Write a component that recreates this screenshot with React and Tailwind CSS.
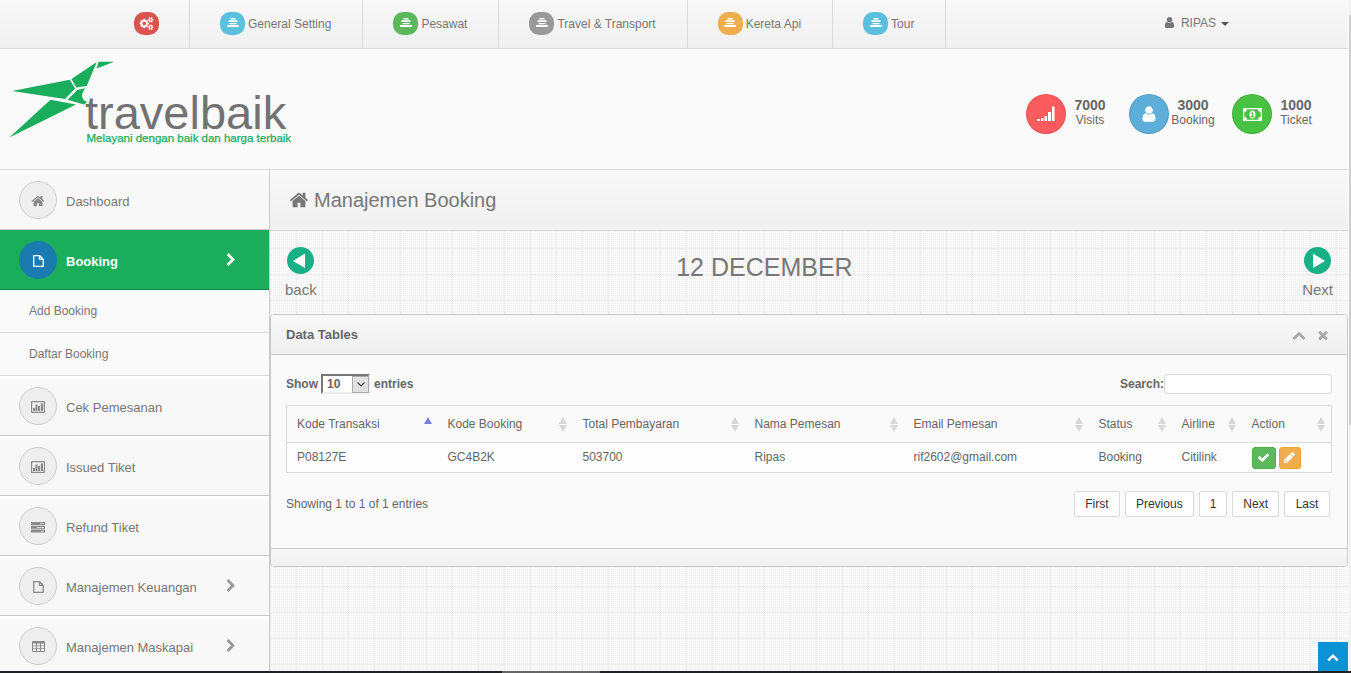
import React from "react";

const PATHS = {
  home: "M1472 992v480q0 26-19 45t-45 19h-384v-384h-256v384h-384q-26 0-45-19t-19-45v-480q0-1 .5-3t.5-3l575-474 575 474q1 2 1 6zm223-69l-62 74q-8 9-21 11h-3q-13 0-21-7l-692-577-692 577q-12 8-24 7-13-2-21-11l-62-74q-8-10-7-23.5t11-21.5l719-599q32-26 76-26t76 26l244 204v-195q0-14 9-23t23-9h192q14 0 23 9t9 23v408l219 182q10 8 11 21.5t-7 23.5z",
  user: "M1536 1399q0 109-62.5 187t-150.5 78h-854q-88 0-150.5-78t-62.5-187q0-85 8.5-160.5t31.5-152 58.5-131 94-89 134.5-34.5q131 128 313 128t313-128q76 0 134.5 34.5t94 89 58.5 131 31.5 152 8.5 160.5zm-256-887q0 159-112.5 271.5t-271.5 112.5-271.5-112.5-112.5-271.5 112.5-271.5 271.5-112.5 271.5 112.5 112.5 271.5z",
  check: "M1671 566q0 40-28 68l-724 724-136 136q-28 28-68 28t-68-28l-136-136-362-362q-28-28-28-68t28-68l136-136q28-28 68-28t68 28l294 295 656-657q28-28 68-28t68 28l136 136q28 28 28 68z",
  times: "M1490 1322q0 40-28 68l-136 136q-28 28-68 28t-68-28l-294-294-294 294q-28 28-68 28t-68-28l-136-136q-28-28-28-68t28-68l294-294-294-294q-28-28-28-68t28-68l136-136q28-28 68-28t68 28l294 294 294-294q28-28 68-28t68 28l136 136q28 28 28 68t-28 68l-294 294 294 294q28 28 28 68z",
  pencil: "M491 1536l60-60-235-235-60 60v107h128v128h107zM960 416l416 416-832 832h-416v-416zm683 96q0 53-37 90l-166 166-416-416 166-165q36-38 90-38 53 0 91 38l235 234q37 39 37 91z",
  right: "M1363 877l-742 742q-19 19-45 19t-45-19l-166-166q-19-19-19-45t19-45l531-531-531-531q-19-19-19-45t19-45l166-166q19-19 45-19t45 19l742 742q19 19 19 45t-19 45z",
  up: "M1683 1331l-166 165q-19 19-45 19t-45-19l-531-531-531 531q-19 19-45 19t-45-19l-166-165q-19-19-19-45.5t19-45.5l742-741q19-19 45-19t45 19l742 741q19 19 19 45.5t-19 45.5z",
  cogs: "M832 896q0-106-75-181t-181-75-181 75-75 181 75 181 181 75 181-75 75-181zm768 512q0-52-38-90t-90-38-90 38-38 90q0 53 37.5 90.5t90.5 37.5 90.5-37.5 37.5-90.5zm0-1024q0-52-38-90t-90-38-90 38-38 90q0 53 37.5 90.5t90.5 37.5 90.5-37.5 37.5-90.5zm-384 421v185q0 10-7 19.5t-16 10.5l-155 24q-11 35-32 76 34 48 90 115 7 11 7 20 0 12-7 19-23 30-82.5 89.5t-78.5 59.5q-11 0-21-7l-115-90q-37 19-77 31-11 108-23 155-7 24-30 24h-186q-11 0-20-7.5t-10-17.5l-23-153q-34-10-75-31l-118 89q-7 7-20 7-11 0-21-8-144-133-144-160 0-9 7-19 10-14 41-53t47-61q-23-44-35-82l-152-24q-10-1-17-9.5t-7-19.5v-185q0-10 7-19.5t16-10.5l155-24q11-35 32-76-34-48-90-115-7-11-7-20 0-12 7-20 22-30 82-89t79-59q11 0 21 7l115 90q34-18 77-32 11-108 23-154 7-24 30-24h186q11 0 20 7.5t10 17.5l23 153q34 10 75 31l118-89q8-7 20-7 11 0 21 8 144 133 144 160 0 8-7 19-12 16-42 54t-45 60q23 48 34 82l152 23q10 2 17 10.5t7 19.5zm640 533v140q0 16-149 31-12 27-30 52 51 113 51 138 0 4-4 7-122 71-124 71-8 0-46-47t-52-68q-20 2-30 2t-30-2q-14 21-52 68t-46 47q-2 0-124-71-4-3-4-7 0-25 51-138-18-25-30-52-149-15-149-31v-140q0-16 149-31 13-29 30-52-51-113-51-138 0-4 4-7 4-2 35-20t59-34 30-16q8 0 46 46.5t52 67.5q20-2 30-2t30 2q51-71 92-112l6-2q4 0 124 70 4 3 4 7 0 25-51 138 17 23 30 52 149 15 149 31zm0-1024v140q0 16-149 31-12 27-30 52 51 113 51 138 0 4-4 7-122 71-124 71-8 0-46-47t-52-68q-20 2-30 2t-30-2q-14 21-52 68t-46 47q-2 0-124-71-4-3-4-7 0-25 51-138-18-25-30-52-149-15-149-31v-140q0-16 149-31 13-29 30-52-51-113-51-138 0-4 4-7 4-2 35-20t59-34 30-16q8 0 46 46.5t52 67.5q20-2 30-2t30 2q51-71 92-112l6-2q4 0 124 70 4 3 4 7 0 25-51 138 17 23 30 52 149 15 149 31z",
  file: "M1596 380q28 28 48 76t20 88v1152q0 40-28 68t-68 28h-1344q-40 0-68-28t-28-68v-1600q0-40 28-68t68-28h896q40 0 88 20t76 48zm-444-244v376h376q-10-29-22-41l-313-313q-12-12-41-22zm384 1528v-1024h-416q-40 0-68-28t-28-68v-416h-768v1536h1280z",
};

function Icon({ name, className = "size-[14px]" }) {
  return (
    <svg viewBox="0 0 1792 1792" fill="currentColor" aria-hidden="true" className={"shrink-0 overflow-visible " + className}>
      <path d={PATHS[name]} />
    </svg>
  );
}

const FileIcon = () => (
  <svg viewBox="0 0 11 12" className="h-3 w-[11px]" fill="none" stroke="currentColor" strokeWidth="1.300" strokeLinejoin="round" aria-hidden="true">
    <path d="M.7.7h6l3.500 3.500v7.100h-9.500zM6.500.7v3.700h3.700" />
  </svg>
);

const StackIcon = () => (
  <svg viewBox="0 0 12 11" className="h-[11px] w-3" fill="currentColor" aria-hidden="true">
    <path d="M3.500 0h5v1.500h-5zM1.500 2.200h9v1.800h-9zM2.500 5h7v1.300h-7zM0 7h12v2h-12z" />
  </svg>
);

const ChartIcon = () => (
  <svg viewBox="0 0 14 12" className="h-3 w-[14px]" fill="currentColor" aria-hidden="true">
    <path fillRule="evenodd" d="M1 0h12q1 0 1 1v10q0 1-1 1h-12q-1 0-1-1v-10q0-1 1-1zM1.200 1.200v9.600h11.600v-9.600z" />
    <path d="M2 7h2v3h-2zM4.500 3.500h2v6.500h-2zM7 5h2v5h-2zM9.800 2.500h2.200v7.500h-2.200z" />
  </svg>
);

const TasksIcon = () => (
  <svg viewBox="0 0 14 12" className="h-3 w-[14px]" fill="currentColor" aria-hidden="true">
    <path fillRule="evenodd" d="M0 1h14v3h-14zM9 2.200h4v.8h-4zM0 4.700h14v3h-14zM6 6h7v.8h-7zM0 8.500h14v3h-14zM10 9.700h3v.8h-3z" />
  </svg>
);

const GridIcon = () => (
  <svg viewBox="0 0 13 12" className="h-3 w-[13px]" fill="currentColor" aria-hidden="true">
    <path fillRule="evenodd" d="M1 0h11q1 0 1 1v9q0 1-1 1h-11q-1 0-1-1v-9q0-1 1-1zM1 2.500v2h3v-2zM5 2.500v2h3v-2zM9 2.500v2h3v-2zM1 5.300v2h3v-2zM5 5.300v2h3v-2zM9 5.300v2h3v-2zM1 8.100v2h3v-2zM5 8.100v2h3v-2zM9 8.100v2h3v-2z" />
  </svg>
);

const SignalIcon = () => (
  <svg viewBox="0 0 18 16" className="h-4 w-[18px]" fill="currentColor" aria-hidden="true">
    <path d="M0 13h3v2h-3zM4 12h2.500v3h-2.500zM7.500 10h2.500v5h-2.500zM11 6h3v9h-3zM15 0.500h2.500v14.500h-2.500z" />
  </svg>
);

const MoneyIcon = () => (
  <svg viewBox="0 0 19 13" className="h-[13px] w-[19px]" fill="currentColor" aria-hidden="true">
    <path fillRule="evenodd" d="M0 0h19v13h-19zM4 1.300a2.700 2.700 0 0 1-2.700 2.700v5a2.700 2.700 0 0 1 2.700 2.700h11a2.700 2.700 0 0 1 2.700-2.700v-5a2.700 2.700 0 0 1-2.700-2.700z" />
    <path fillRule="evenodd" d="M9.500 2.500c2 0 3 2 3 4s-1 4-3 4-3-2-3-4 1-4 3-4zM9.200 4.200l-1.500 1.200.6.700.7-.5v2.500h-1v.9h3v-.9h-.9v-3.900z" />
  </svg>
);

const ArrowCircle = ({ flip }) => (
  <svg viewBox="0 0 27 27" className={flip ? "size-[27px] -scale-x-100" : "size-[27px]"} aria-hidden="true">
    <circle cx="13.500" cy="13.500" r="13.500" fill="#19b088" />
    <path d="M6 14 18 6.500v14.500z" fill="#fff" />
  </svg>
);

const Logo = () => (
  <svg viewBox="18 120 564 172" className="h-[86px] w-[282px]" role="img" aria-label="travelbaik">
    <g transform="scale(2)" fill="#1aad5c">
      <path d="M98.700 61.800 114.200 61.800 96.500 68.500z" />
      <path d="M96.800 62 86.700 86 76.300 87.500 71.500 79z" />
      <path d="M12 91 69.700 79.800 75.200 88.500 65 99z" />
      <path d="M77.300 90 85 88.300 82.300 93.500 82 96.500 84 100.500 87.300 102 84 104.500 67.500 99.700z" />
      <path d="M50.500 99.800 76 104.500 9.300 137.500z" />
    </g>
    <text x="170" y="258" fontSize="94" fill="#727272" fontFamily="Liberation Sans, sans-serif">travelbaik</text>
    <text x="173" y="284" fontSize="23" fill="#1aad5c" stroke="#1aad5c" strokeWidth=".5" fontFamily="Liberation Sans, sans-serif">Melayani dengan baik dan harga terbaik</text>
  </svg>
);

const NAV = [
  { label: "General Setting", color: "bg-[#5bc0de]" },
  { label: "Pesawat", color: "bg-[#5cb85c]" },
  { label: "Travel & Transport", color: "bg-[#999999]" },
  { label: "Kereta Api", color: "bg-[#f0ad4e]" },
  { label: "Tour", color: "bg-[#5bc0de]" },
];

const STATS = [
  { value: "7000", label: "Visits", color: "bg-[#fd5c5e]", icon: <SignalIcon /> },
  { value: "3000", label: "Booking", color: "bg-[#5dafda]", icon: <Icon name="user" className="size-[18px]" /> },
  { value: "1000", label: "Ticket", color: "bg-[#49c143]", icon: <MoneyIcon /> },
];

const MENU = [
  { label: "Dashboard", icon: <Icon name="home" /> },
  { label: "Booking", icon: <FileIcon />, active: true, more: true, sub: ["Add Booking", "Daftar Booking"] },
  { label: "Cek Pemesanan", icon: <ChartIcon /> },
  { label: "Issued Tiket", icon: <ChartIcon /> },
  { label: "Refund Tiket", icon: <TasksIcon /> },
  { label: "Manajemen Keuangan", icon: <FileIcon />, more: true },
  { label: "Manajemen Maskapai", icon: <GridIcon />, more: true },
];

const COLUMNS = [
  { label: "Kode Transaksi", width: "w-[151px]", sorted: true },
  { label: "Kode Booking", width: "w-[135px]" },
  { label: "Total Pembayaran", width: "w-[172px]" },
  { label: "Nama Pemesan", width: "w-[159px]" },
  { label: "Email Pemesan", width: "w-[185px]" },
  { label: "Status", width: "w-[83px]" },
  { label: "Airline", width: "w-[70px]" },
  { label: "Action", width: "w-[90px]" },
];

const ROW = ["P08127E", "GC4B2K", "503700", "Ripas", "rif2602@gmail.com", "Booking", "Citilink"];

const SortIcon = ({ sorted }) => (
  <svg viewBox="0 0 8 15" className="h-[15px] w-2 shrink-0" aria-hidden="true">
    <path d="M4 0 8 7H0z" fill={sorted ? "#7b80e0" : "#d8d8d8"} />
    {!sorted && <path d="M0 8h8L4 15z" fill="#d8d8d8" />}
  </svg>
);

function TopBar() {
  return (
    <header className="flex h-[49px] shrink-0 items-stretch border-b border-[#d9d9d9] bg-linear-to-b from-[#f8f8f8] to-[#f0f0f0] pl-[104px] text-xs text-[#777]">
      <nav className="flex" aria-label="Main">
        <a href="#settings" aria-label="Settings" className="flex items-center border-r border-[#d9d9d9] px-[30px] pb-px">
          <span className="flex h-[23px] w-[25px] items-center justify-center rounded-[10px] bg-[#d9534f] text-white">
            <Icon name="cogs" className="size-[13px]" />
          </span>
        </a>
        {NAV.map((n) => (
          <a key={n.label} href="#nav" className="flex items-center gap-[3px] border-r border-[#d9d9d9] pr-[31px] pb-px pl-[30px] whitespace-nowrap">
            <span className={"flex h-[23px] w-[25px] items-center justify-center rounded-[10px] text-white " + n.color}>
              <StackIcon />
            </span>
            {n.label}
          </a>
        ))}
      </nav>
      <button type="button" className="mr-[119px] ml-auto flex items-center pb-[3px]">
        <Icon name="user" className="mr-[5px] size-[13px]" />
        RIPAS
        <svg viewBox="0 0 8 4" className="mt-[2px] ml-[5px] h-1 w-2" fill="#555" aria-hidden="true">
          <path d="M0 0h8L4 4z" />
        </svg>
      </button>
    </header>
  );
}

function Banner() {
  return (
    <div className="flex h-[121px] shrink-0 items-center justify-between border-b border-[#d9d9d9] bg-[#fafafa] pr-7 pl-[9px]">
      <div className="pb-3">
        <Logo />
      </div>
      <div className="flex gap-[15px] pt-[10px]">
        {STATS.map((s) => (
          <div key={s.label} className="flex items-center">
            <span className={"flex size-10 items-center justify-center rounded-full border border-black/10 text-white " + s.color}>{s.icon}</span>
            <span className="w-12 pb-[3px] text-center text-xs leading-[15px] text-[#666]">
              <strong className="block text-sm leading-4">{s.value}</strong>
              {s.label}
            </span>
          </div>
        ))}
      </div>
    </div>
  );
}

function Sidebar() {
  return (
    <aside className="w-[270px] shrink-0 overflow-hidden border-r border-[#c9c9c9] bg-[#f8f8f8] text-[13px] text-[#777]">
      <ul>
        {MENU.map((m) => (
          <li key={m.label}>
            <a
              href="#menu"
              className={
                "flex h-[60px] items-center border-b pr-[31px] pl-[19px] " +
                (m.active ? "border-[#148a48] bg-[#1aad5c] font-bold text-white" : "border-[#c9c9c9] bg-linear-to-b from-white from-0% to-[#f8f8f8] to-10%")
              }
            >
              <span
                className={
                  "mr-[9px] flex size-[38px] items-center justify-center rounded-full " +
                  (m.active ? "bg-[#1a7bb0]" : "border border-[#ccc] bg-[#eee] text-[#8a8a8a]")
                }
              >
                <span className="pt-[2px]">{m.icon}</span>
              </span>
              <span className="pt-1">{m.label}</span>
              {m.more && <Icon name="right" className={m.active ? "ml-auto size-[14px]" : "ml-auto size-[14px] text-[#999]"} />}
            </a>
            {m.sub && (
              <ul className="bg-[#fafafa] text-xs">
                {m.sub.map((s) => (
                  <li key={s}>
                    <a href="#sub" className="flex h-[43px] items-center border-b border-[#d9d9d9] pl-[29px]">
                      {s}
                    </a>
                  </li>
                ))}
              </ul>
            )}
          </li>
        ))}
      </ul>
    </aside>
  );
}

function BookingTable() {
  return (
    <table className="mt-[11px] w-full table-fixed border-collapse border border-[#d9d9d9] text-left">
      <thead>
        <tr className="h-[37px] border-b border-[#d9d9d9]">
          {COLUMNS.map((c) => (
            <th key={c.label} scope="col" className={"pr-[6px] pl-[10px] font-normal " + c.width}>
              <span className="flex items-center justify-between whitespace-nowrap">
                {c.label}
                <SortIcon sorted={c.sorted} />
              </span>
            </th>
          ))}
        </tr>
      </thead>
      <tbody>
        <tr className="h-[30px] bg-[#fdfdfd]">
          {ROW.map((v) => (
            <td key={v} className="pb-[2px] pl-[10px]">
              {v}
            </td>
          ))}
          <td className="pl-[10px]">
            <span className="flex gap-[3px]">
              <button type="button" aria-label="Approve" className="flex h-[22px] w-6 items-center justify-center rounded-[3px] border border-[#4cae4c] bg-[#5cb85c] text-white">
                <Icon name="check" className="size-[13px]" />
              </button>
              <button type="button" aria-label="Edit" className="flex h-[22px] w-[22px] items-center justify-center rounded-[3px] border border-[#eea236] bg-[#f0ad4e] text-white">
                <Icon name="pencil" className="size-[13px]" />
              </button>
            </span>
          </td>
        </tr>
      </tbody>
    </table>
  );
}

function Panel() {
  return (
    <section className="overflow-hidden rounded-[4px] border border-[#c9c9c9] bg-[#fafafa] text-xs text-[#666]">
      <div className="flex h-10 items-center border-b border-[#c9c9c9] bg-linear-to-b from-[#f8f8f8] to-[#f0f0f0] pr-[17px] pl-[15px]">
        <h2 className="pt-px text-[13px] font-bold">Data Tables</h2>
        <button type="button" aria-label="Collapse" className="ml-auto text-[#aaa]">
          <Icon name="up" />
        </button>
        <button type="button" aria-label="Close" className="ml-[10px] text-[#aaa]">
          <Icon name="times" />
        </button>
      </div>
      <div className="px-[15px] pt-[19px] pb-[31px]">
        <div className="flex items-center justify-between font-bold">
          <div className="flex items-center">
            <label htmlFor="length">Show</label>
            <span className="relative mr-1 ml-[3px] flex">
              <select
                id="length"
                defaultValue="10"
                className="h-5 w-[49px] appearance-none border-2 border-t-[#777] border-r-[#eee] border-b-[#eee] border-l-[#777] bg-white pl-1 leading-4"
              >
                <option>10</option>
                <option>25</option>
                <option>50</option>
              </select>
              <span className="pointer-events-none absolute top-[2px] right-px flex h-[17px] w-[17px] items-center justify-center border border-[#aaa] bg-[#e1e1e1]">
                <svg viewBox="0 0 8 5" className="h-[5px] w-2" fill="none" stroke="#444" strokeWidth="1.200" aria-hidden="true">
                  <path d="M.5.5 4 4 7.500.5" />
                </svg>
              </span>
            </span>
            <label htmlFor="length">entries</label>
          </div>
          <div className="flex items-center">
            <label htmlFor="search">Search:</label>
            <input id="search" type="text" className="h-5 w-[168px] rounded-[3px] border border-[#d9d9d9] bg-white px-1" />
          </div>
        </div>
        <BookingTable />
        <div className="mt-[18px] flex items-center justify-between">
          <p>Showing 1 to 1 of 1 entries</p>
          <div className="mr-[2px] flex gap-[5px] text-[#333]">
            {["First", "Previous", "1", "Next", "Last"].map((p) => (
              <button key={p} type="button" className={"h-[26px] rounded-[2px] border border-[#d9d9d9] bg-white px-[10px] " + (p === "1" ? "" : "min-w-[46px]")}>
                {p}
              </button>
            ))}
          </div>
        </div>
      </div>
      <div className="h-[18px] border-t border-[#c9c9c9] bg-linear-to-b from-[#f8f8f8] to-[#f0f0f0]" />
    </section>
  );
}

export default function App() {
  return (
    <div className="flex h-screen flex-col overflow-hidden bg-[#fafafa] font-['Liberation_Sans',Arial,sans-serif]">
      <div className="flex min-h-0 flex-1">
        <div className="flex min-w-0 flex-1 flex-col">
          <TopBar />
          <Banner />
          <div className="flex min-h-0 flex-1">
            <Sidebar />
            <main className="min-w-0 flex-1 overflow-hidden bg-[#fafafa] bg-[linear-gradient(90deg,#eeeeee_1px,transparent_1px),linear-gradient(#eeeeee_1px,transparent_1px),conic-gradient(transparent_75%,#efefef_0)] bg-size-[26px_26px,26px_26px,2px_2px] bg-position-[0_0,0_0,1px_1px]">
              <h1 className="flex h-[61px] items-center border-b border-[#d9d9d9] bg-linear-to-b from-[#f8f8f8] to-[#f0f0f0] pl-[19px] text-xl text-[#777]">
                <Icon name="home" className="mr-[5px] size-5" />
                Manajemen Booking
              </h1>
              <div className="flex h-[83px] items-start px-[15px] pt-4 text-[15px] text-[#777]">
                <a href="#back" className="flex flex-col items-center gap-[5px]">
                  <ArrowCircle />
                  back
                </a>
                <p className="flex-1 pt-1 pr-[90px] text-center text-[25px] leading-8">12 DECEMBER</p>
                <a href="#next" className="flex flex-col items-center gap-[5px]">
                  <ArrowCircle flip />
                  Next
                </a>
              </div>
              <Panel />
            </main>
          </div>
        </div>
        <div className="w-[3px] shrink-0 border-l border-white bg-[#f0f0f0] pt-[15px]" aria-hidden="true">
          <div className="h-[410px] bg-[#cdcdcd]" />
        </div>
      </div>
      <div className="flex h-[2px] shrink-0 bg-[#1e2024] pl-[502px]" aria-hidden="true">
        <div className="w-[98px] bg-[#666]" />
      </div>
      <button type="button" aria-label="Scroll to top" className="fixed right-[3px] bottom-[2px] flex h-[29px] w-[30px] items-center justify-center bg-[#0b93d5] text-white">
        <Icon name="up" className="size-3" />
      </button>
    </div>
  );
}
